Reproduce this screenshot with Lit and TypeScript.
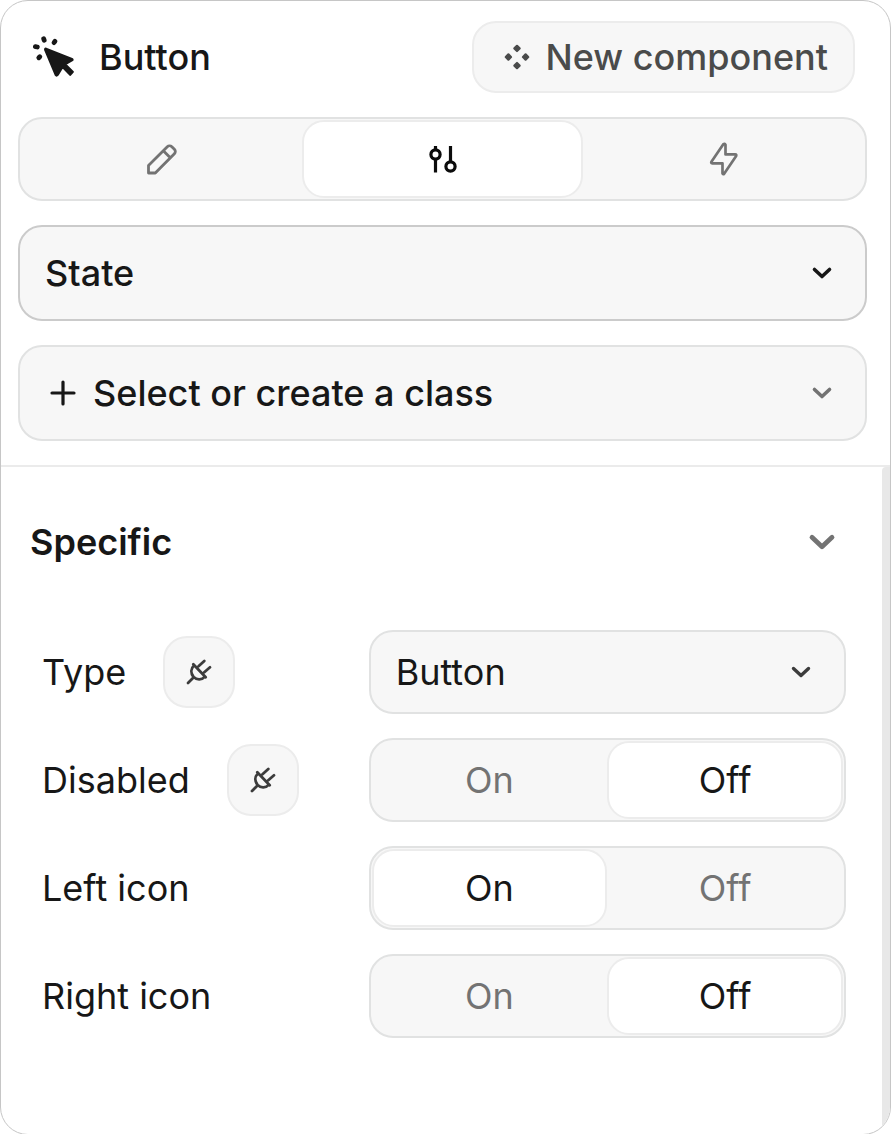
import { LitElement, html, css, svg, nothing } from "lit";
import { customElement, property, state } from "lit/decorators.js";
import { classMap } from "lit/directives/class-map.js";

const base = css`
  *,
  *::before,
  *::after {
    box-sizing: border-box;
  }
  svg {
    display: block;
    fill: none;
    stroke: currentColor;
    stroke-linecap: round;
    stroke-linejoin: round;
    flex: none;
  }
  button,
  select,
  input {
    font: inherit;
    color: inherit;
    margin: 0;
  }
  .hidden {
    appearance: none;
    position: absolute;
    inset: 0;
    opacity: 0;
    cursor: pointer;
  }
`;

const chevron = (size: number, weight: number) => html`
  <svg class="chevron" width=${size} height=${size} viewBox="0 0 24 24" stroke-width=${weight} aria-hidden="true">
    <path d="M4.500 8.500 12 15.500l7.500-7"></path>
  </svg>
`;

const cursorIcon = html`
  <svg width="44" height="44" viewBox="0 0 44 44" aria-hidden="true">
    <path d="M15 13.500 41 23.800Q42.500 24.700 41 25.500L34.500 29.300 42 37 39.300 40 31.500 32.200 26.800 40Q25.500 41.500 24.500 40L14 15Q13.700 13.200 15 13.500Z" fill="currentColor" stroke-width="1.800"></path>
    <path d="M12.700 3.700 13.200 5.300M24 6.300 23 7.600M4.400 11.600 6.300 12M8.800 21.800 7.800 22.800" stroke-width="4.800"></path>
  </svg>
`;

const diamondsIcon = html`
  <svg width="26" height="26" viewBox="0 0 26 26" aria-hidden="true">
    <path d="M13 1.800 15.600 4.400 13 7 10.400 4.400ZM4.400 10.400 7 13 4.400 15.600 1.800 13ZM21.600 10.400 24.200 13 21.600 15.600 19 13ZM13 19 15.600 21.600 13 24.200 10.400 21.600Z" fill="currentColor" stroke-width="2.200"></path>
  </svg>
`;

const plusIcon = html`
  <svg class="lead" width="26" height="26" viewBox="0 0 26 26" stroke-width="3.200" aria-hidden="true">
    <path d="M13 2v22M2 13h22"></path>
  </svg>
`;

const plugIcon = html`
  <svg width="28" height="28" viewBox="0 0 28 28" stroke-width="2.800" aria-hidden="true">
    <path d="M3 25 8.500 19.500M8.300 6.300 20.700 19.200M9.200 7.200C5.500 10.500 5.600 15.200 8.600 19.100 12 22.300 16.600 22.300 20 18.600M13.500 8.300 19.300 3M19 14.500 25 9.300"></path>
  </svg>
`;

const tabIcons: Record<string, unknown> = {
  Design: svg`<path stroke-width="2.800" d="M4.500 32V24.500L23.300 5.700a3.200 3.200 0 0 1 4.500 0l2.600 2.600a3.200 3.200 0 0 1 0 4.500L11.300 32ZM19.300 9.800 26.300 16.800"></path>`,
  Settings: svg`<g stroke-width="3.200" stroke-linecap="butt"><circle cx="10.500" cy="13.500" r="4.600"></circle><circle cx="25.500" cy="25.500" r="4.600"></circle><path d="M10.500 5v4M10.500 18v13.500M25.500 5v16"></path></g>`,
  Interactions: svg`<path stroke-width="2.700" d="M17.300 3.300 5.600 20.500Q4.500 22.300 6.300 22.300H16.500V32.300Q17 34 18.300 32.500L30 15.300Q30.900 13.400 29.200 13.400H19.500V3.700Q18.700 2 17.300 3.300Z"></path>`,
};

@customElement("on-off-toggle")
export class OnOffToggle extends LitElement {
  @property() label = "";
  @property() value = "Off";

  static styles = [
    base,
    css`
      .group {
        display: grid;
        grid-template-columns: 1fr 1fr;
        height: 84px;
        margin: 0;
        padding: 1px;
        border: 2px solid #e1e2e2;
        border-radius: 24px;
        background: #f7f7f7;
      }
      .option {
        position: relative;
        display: flex;
        align-items: center;
        justify-content: center;
        border: 2px solid transparent;
        border-radius: 22px;
        color: #737373;
      }
      .option.on {
        background: #fff;
        border-color: #ececec;
        color: #171717;
      }
    `,
  ];

  render() {
    return html`
      <div class="group" role="radiogroup" aria-label=${this.label}>
        ${["On", "Off"].map(
          (o) => html`
            <label class=${classMap({ option: true, on: this.value === o })}>
              <input class="hidden" type="radio" name="toggle" .checked=${this.value === o} @change=${() => (this.value = o)} />
              ${o}
            </label>
          `
        )}
      </div>
    `;
  }
}

@customElement("app-root")
export class AppRoot extends LitElement {
  @state() private tab = "Settings";
  @state() private open = true;

  static styles = [
    base,
    css`
      :host {
        display: block;
        background: #fff;
        color: #171717;
        font-family: Inter, "Liberation Sans", sans-serif;
        font-size: 36px;
        line-height: 48px;
      }
      .panel {
        display: flex;
        flex-direction: column;
        min-height: 100vh;
        border: 1px solid #c6c6c6;
        border-radius: 28px;
        overflow: hidden;
      }
      .top {
        display: grid;
        gap: 24px;
        padding: 20px 23px 24px 17px;
        border-bottom: 2px solid #ebebeb;
        font-weight: 500;
      }
      .header {
        display: flex;
        align-items: center;
        justify-content: space-between;
        padding: 0 12px 0 13px;
      }
      .title {
        display: flex;
        align-items: center;
        gap: 24px;
        margin: 0;
        font-size: inherit;
        font-weight: 500;
      }
      .soft {
        display: flex;
        align-items: center;
        justify-content: center;
        height: 72px;
        padding: 0;
        border: 2px solid #ececec;
        border-radius: 24px;
        background: #f7f7f7;
        color: #4a4b4b;
      }
      .new {
        gap: 16px;
        padding: 0 25px 0 30px;
      }
      .plug {
        width: 72px;
        color: #3c3c3c;
      }
      .tabs {
        display: grid;
        grid-template-columns: repeat(3, 1fr);
        height: 84px;
        padding: 1px;
        border: 2px solid #e1e2e2;
        border-radius: 24px;
        background: #f7f7f7;
      }
      .tab {
        display: flex;
        align-items: center;
        justify-content: center;
        padding: 0;
        border: 2px solid transparent;
        border-radius: 22px;
        background: none;
        color: #737373;
      }
      .tab.on {
        background: #fff;
        border-color: #ececec;
        color: #0c0c0c;
      }
      .select {
        display: grid;
        align-items: center;
      }
      .select > * {
        grid-area: 1 / 1;
      }
      .select svg {
        pointer-events: none;
      }
      .select select {
        appearance: none;
        width: 100%;
        height: 96px;
        padding: 0 72px 0 25px;
        border: 2px solid #e1e2e2;
        border-radius: 24px;
        background: #f7f7f7;
      }
      .select.strong select {
        border-color: #cbcbcb;
      }
      .select.compact select {
        height: 84px;
      }
      .select.with-lead select {
        padding-left: 73px;
      }
      .lead {
        z-index: 1;
        margin-left: 32px;
      }
      .chevron {
        justify-self: end;
        margin-right: 33px;
      }
      .compact .chevron {
        color: #3c3c3c;
      }
      .muted .chevron,
      .section-head .chevron {
        color: #737373;
      }
      .scroller {
        display: grid;
        grid-template-columns: 1fr 8px;
        flex: 1;
      }
      .track {
        background: #e8e8e8;
        border-top-left-radius: 4px;
      }
      .section {
        padding: 51px 36px 96px 29px;
      }
      .section-head {
        display: flex;
        align-items: center;
        justify-content: space-between;
        width: 100%;
        padding: 0 8px 0 0;
        border: 0;
        background: none;
        font-weight: 600;
        text-align: left;
      }
      .section-head .chevron {
        margin: 0;
      }
      .heading {
        margin: 0;
        font-size: inherit;
      }
      .rows {
        display: grid;
        gap: 24px;
        padding: 64px 0 0 12px;
      }
      .row {
        display: grid;
        grid-template-columns: 13fr 19fr;
        align-items: center;
      }
      .name {
        display: flex;
        align-items: center;
        gap: 37px;
      }
    `,
  ];

  private plug(label: string) {
    return html`<button class="soft plug" aria-label="Connect ${label}">${plugIcon}</button>`;
  }

  private toggleRow(label: string, value: string, bindable = false) {
    return html`
      <div class="row">
        <div class="name"><span>${label}</span>${bindable ? this.plug(label) : nothing}</div>
        <on-off-toggle label=${label} value=${value}></on-off-toggle>
      </div>
    `;
  }

  render() {
    return html`
      <main class="panel">
        <div class="top">
          <header class="header">
            <h1 class="title">${cursorIcon}<span>Button</span></h1>
            <button class="soft new">${diamondsIcon}<span>New component</span></button>
          </header>
          <div class="tabs" role="tablist">
            ${Object.keys(tabIcons).map(
              (t) => html`
                <button
                  class=${classMap({ tab: true, on: this.tab === t })}
                  role="tab"
                  aria-label=${t}
                  aria-selected=${this.tab === t}
                  @click=${() => (this.tab = t)}
                >
                  <svg width="36" height="36" viewBox="0 0 36 36" aria-hidden="true">${tabIcons[t]}</svg>
                </button>
              `
            )}
          </div>
          <div class="select strong">
            <select aria-label="State"><option>State</option></select>
            ${chevron(24, 3.6)}
          </div>
          <div class="select with-lead muted">
            ${plusIcon}
            <select aria-label="Class"><option>Select or create a class</option></select>
            ${chevron(24, 3.6)}
          </div>
        </div>
        <div class="scroller">
          <section class="section">
            <h2 class="heading">
              <button class="section-head" aria-expanded=${this.open} @click=${() => (this.open = !this.open)}>
                <span>Specific</span>${chevron(32, 3.6)}
              </button>
            </h2>
            ${this.open
              ? html`
                  <div class="rows">
                    <div class="row">
                      <div class="name"><label for="type">Type</label>${this.plug("Type")}</div>
                      <div class="select compact">
                        <select id="type"><option>Button</option></select>
                        ${chevron(24, 3.4)}
                      </div>
                    </div>
                    ${this.toggleRow("Disabled", "Off", true)}
                    ${this.toggleRow("Left icon", "On")}
                    ${this.toggleRow("Right icon", "Off")}
                  </div>
                `
              : nothing}
          </section>
          <div class="track"></div>
        </div>
      </main>
    `;
  }
}
